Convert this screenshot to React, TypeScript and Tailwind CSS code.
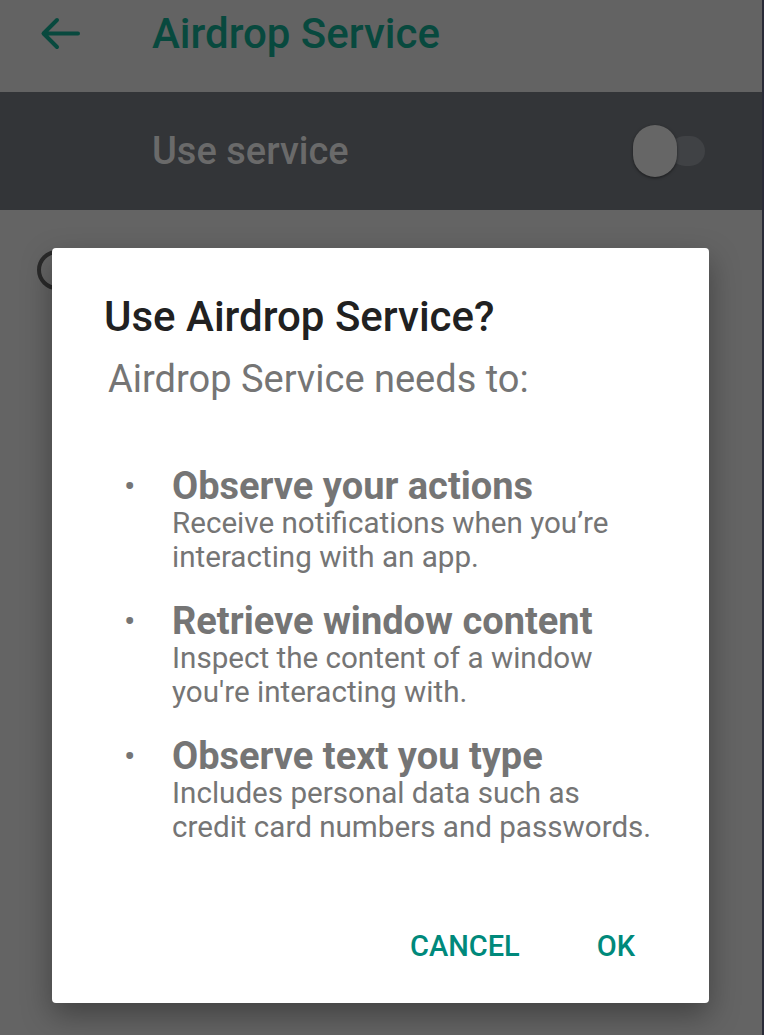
import React from "react";

const permissions = [
  {
    title: "Observe your actions",
    lines: ["Receive notifications when you\u2019re", "interacting with an app."],
  },
  {
    title: "Retrieve window content",
    lines: ["Inspect the content of a window", "you're interacting with."],
  },
  {
    title: "Observe text you type",
    lines: ["Includes personal data such as", "credit card numbers and passwords."],
  },
];

const App = () => {
  return (
    <div
      className="relative w-[764px] h-[1035px] overflow-hidden bg-[#646464] border-r-2 border-[#2a2b38]"
      style={{ fontFamily: "Roboto, 'Noto Sans', sans-serif" }}
    >
      {/* === APP BAR === */}
      <header className="h-[92px] flex items-center pl-[40px] pb-[24px] bg-[#636363]">
        <svg width="40" height="34" viewBox="0 0 40 34" fill="none">
          <path
            d="M38 16.5H4M17 3L3.5 16.5L17 30"
            stroke="#08493e"
            strokeWidth="4"
            strokeLinecap="round"
            strokeLinejoin="round"
          />
        </svg>
        <h1 className="ml-[72px] text-[42px] font-medium leading-none text-[#08493e]">
          Airdrop Service
        </h1>
      </header>

      {/* === SWITCH BAR === */}
      <div className="h-[118px] flex items-center justify-between pl-[152px] pr-[57px] bg-[#333538]">
        <span className="text-[38px] font-medium leading-none text-[#6a6a6a]">
          Use service
        </span>
        <div className="relative w-[72px] h-[52px]">
          <div className="absolute left-[37px] top-[11px] w-[35px] h-[30px] rounded-full bg-[#404245]" />
          <div className="absolute left-0 top-0 w-[44px] h-[52px] rounded-full bg-[#666666] shadow-[0_1px_3px_rgba(0,0,0,0.5)]" />
        </div>
      </div>

      {/* === LIST BEHIND === */}
      <div className="pl-[37px] pt-[40px]">
        <div className="w-[40px] h-[40px] rounded-full border-4 border-[#2a2a2a]" />
      </div>

      {/* === DIALOG === */}
      <div className="absolute left-[52px] top-[248px] w-[657px] h-[755px] bg-white rounded-[4px] shadow-[0_12px_30px_rgba(0,0,0,0.35)] flex flex-col pt-[45px] pl-[52px]">
        <h2 className="text-[42px] leading-[48px] font-medium text-[#212121]">
          Use Airdrop Service?
        </h2>
        <p className="mt-[18px] ml-[4px] text-[38px] leading-[40px] text-[#757575]">
          Airdrop Service needs to:
        </p>

        <ul className="mt-[68px] flex flex-col gap-[28px]">
          {permissions.map((p) => (
            <li key={p.title} className="flex text-[#757575]">
              <span className="w-[68px] pl-[20px] text-[34px] leading-[39px]">•</span>
              <div>
                <div className="text-[38px] leading-[39px] font-bold">{p.title}</div>
                {p.lines.map((l) => (
                  <div key={l} className="text-[29.6px] leading-[34px]">
                    {l}
                  </div>
                ))}
              </div>
            </li>
          ))}
        </ul>

        <div className="mt-auto mb-[39px] flex justify-end gap-[77px] pr-[74px]">
          <button className="text-[29px] leading-[36px] font-medium text-[#00897b]">
            CANCEL
          </button>
          <button className="text-[29px] leading-[36px] font-medium text-[#00897b]">
            OK
          </button>
        </div>
      </div>
    </div>
  );
};

export default App;
